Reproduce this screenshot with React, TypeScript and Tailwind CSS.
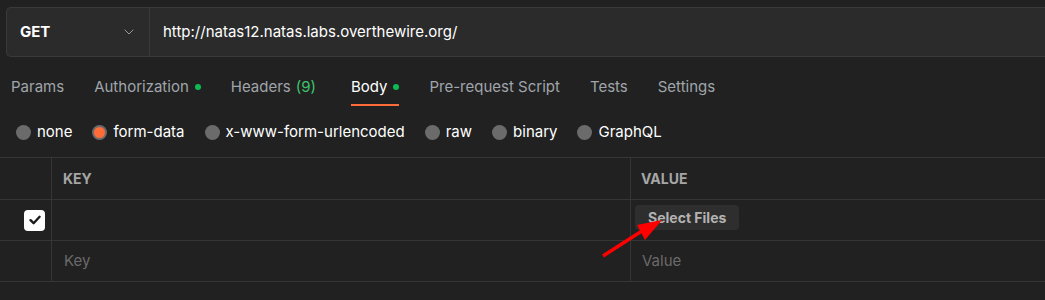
import { ChevronDown } from "lucide-react";

const tabs = [
  { label: "Params" },
  { label: "Authorization", dot: true },
  { label: "Headers", count: "(9)" },
  { label: "Body", dot: true, active: true },
  { label: "Pre-request Script" },
  { label: "Tests" },
  { label: "Settings" },
];

const bodyTypes = ["none", "form-data", "x-www-form-urlencoded", "raw", "binary", "GraphQL"];

export default function App() {
  return (
    <div
      className="relative w-[1045px] h-[300px] overflow-hidden bg-[#212121] text-white"
      style={{ fontFamily: "Inter, 'Noto Sans', sans-serif" }}
    >
      {/* url bar */}
      <div className="pt-[7px] pl-[6px]">
        <div className="flex h-[50px] rounded-l-[5px] border border-r-0 border-[#3a3a3a] bg-[#2b2b2b]">
          <div className="flex w-[143px] items-center justify-between border-r border-[#3a3a3a] pl-[13px] pr-[12px]">
            <span className="text-[15px] font-bold text-white">GET</span>
            <ChevronDown size={16} strokeWidth={1.5} className="text-[#9a9a9a]" />
          </div>
          <div className="flex items-center pl-[13px] text-[15px] text-white">
            http://natas12.natas.labs.overthewire.org/
          </div>
        </div>
      </div>

      {/* tabs */}
      <div className="flex h-[49px] items-start gap-[30px] pl-[11px] pt-[20px]">
        {tabs.map((t) => (
          <div key={t.label} className={`flex flex-col ${t.active ? "ml-[5px]" : ""}`}>
            <div
              className={`flex h-[20px] items-center text-[15px] leading-[20px] ${
                t.active ? "text-white" : "text-[#a0a5ab]"
              }`}
            >
              <span>{t.label}</span>
              {t.count && <span className="ml-[5px] text-[#3ec46d]">{t.count}</span>}
              {t.dot && <span className="ml-[6px] h-[6px] w-[6px] rounded-full bg-[#0cbb52]" />}
            </div>
            <div className={`mt-[7px] h-[2px] ${t.active ? "bg-[#ff6c37]" : ""}`} />
          </div>
        ))}
      </div>

      {/* body type radios */}
      <div className="mt-[18px] flex h-[16px] items-center gap-[20px] pl-[16px]">
        {bodyTypes.map((b) => (
          <div key={b} className="flex items-center gap-[6px]">
            {b === "form-data" ? (
              <span className="flex h-[15px] w-[15px] items-center justify-center rounded-full bg-[#6b6b6b]">
                <span className="h-[11px] w-[11px] rounded-full bg-[#ff6c37]" />
              </span>
            ) : (
              <span className="h-[15px] w-[15px] rounded-full bg-[#6b6b6b]" />
            )}
            <span className="text-[15px] leading-[16px] text-white">{b}</span>
          </div>
        ))}
      </div>

      {/* table */}
      <div className="mt-[17px] border-t border-[#363636]">
        <div className="flex h-[42px] border-b border-[#363636]">
          <div className="w-[52px] border-r border-[#363636]" />
          <div className="flex w-[579px] items-center border-r border-[#363636] pl-[11px] text-[14px] font-bold text-[#a6a6a6]">
            KEY
          </div>
          <div className="flex flex-1 items-center pl-[10px] text-[14px] font-bold text-[#a6a6a6]">VALUE</div>
        </div>
        <div className="flex h-[41px] border-b border-[#363636]">
          <div className="flex w-[52px] items-center border-r border-[#363636] pl-[24px]">
            <span className="flex h-[21px] w-[21px] items-center justify-center rounded-[4px] bg-white">
              <svg width="14" height="14" viewBox="0 0 14 14">
                <path d="M2.5 7.2 L5.6 10.2 L11.6 3.8" fill="none" stroke="#1a1a1a" strokeWidth="2.4" strokeLinecap="round" strokeLinejoin="round" />
              </svg>
            </span>
          </div>
          <div className="w-[579px] border-r border-[#363636]" />
          <div className="flex flex-1 items-start pl-[4px] pt-[5px]">
            <button className="h-[25px] rounded-[4px] bg-[#2e2e2e] px-[13px] text-[14px] font-bold text-[#b3b3b3]">
              Select Files
            </button>
          </div>
        </div>
        <div className="flex h-[41px] border-b border-[#363636]">
          <div className="w-[52px] border-r border-[#363636]" />
          <div className="flex w-[579px] items-center border-r border-[#363636] pl-[12px] text-[15px] text-[#6a6a6a]">
            Key
          </div>
          <div className="flex flex-1 items-center pl-[11px] text-[15px] text-[#6a6a6a]">Value</div>
        </div>
      </div>

      {/* annotation arrow */}
      <svg className="pointer-events-none absolute left-0 top-0" width="1045" height="300">
        <line x1="603" y1="256" x2="645" y2="229" stroke="#ff0000" strokeWidth="3.5" />
        <polygon points="662,220 637,225 645,240" fill="#ff0000" />
      </svg>
    </div>
  );
}
